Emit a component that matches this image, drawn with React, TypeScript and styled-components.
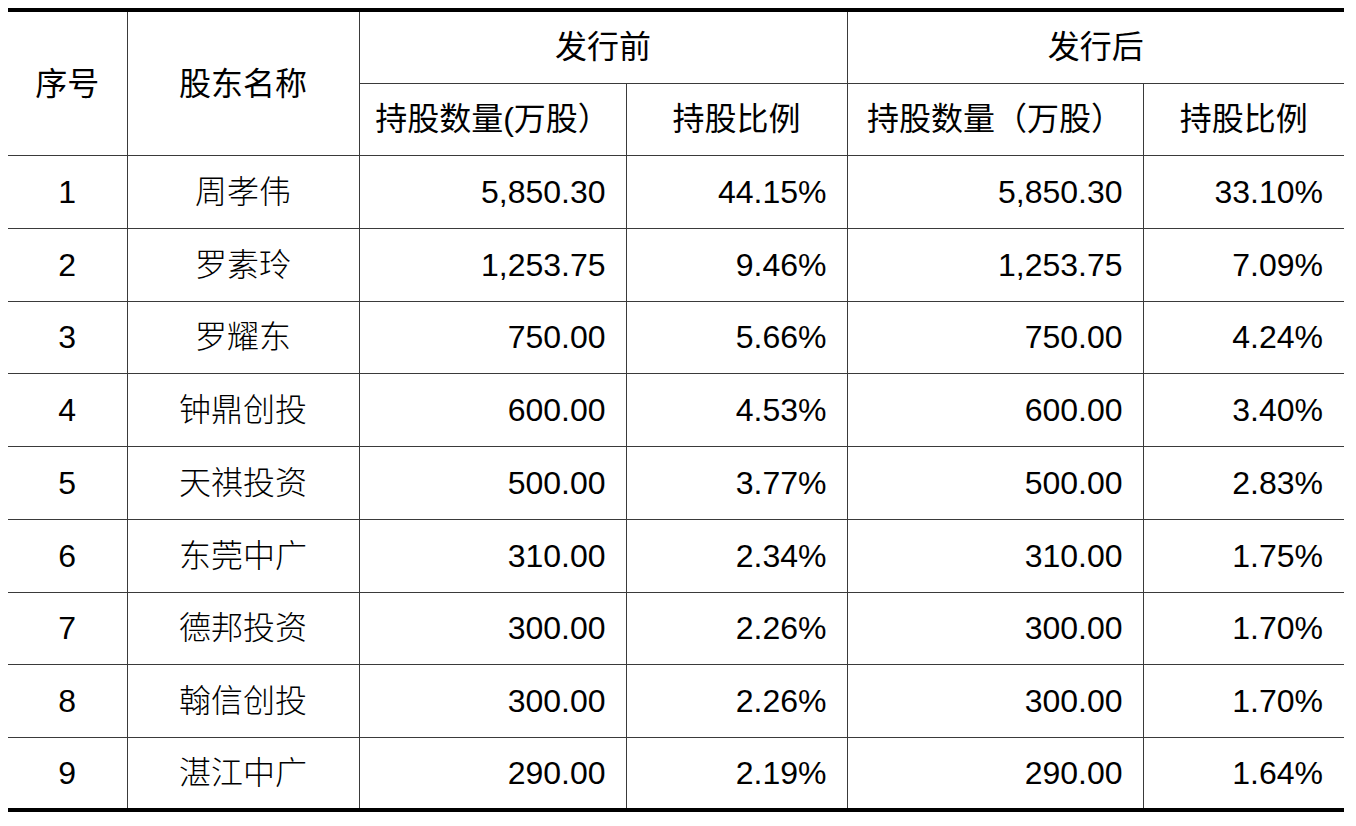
import React from "react";
import styled, { createGlobalStyle } from "styled-components";

const Global = createGlobalStyle`
  html, body { margin: 0; padding: 0; background: #ffffff; }
  body { padding: 8px; }
`;

const Table = styled.table`
  width: 1336px;
  border-collapse: collapse;
  table-layout: fixed;
  font-family: "Liberation Sans", Arial, "Noto Sans CJK SC", sans-serif;
  font-size: 32px;
  color: #000;
  border-top: 4px solid #000;
  border-bottom: 4px solid #000;
`;

const Row = styled.tr<{ $h?: number }>`
  height: ${(p) => p.$h ?? 73}px;
`;

const HeadCell = styled.th`
  font-weight: 400;
  padding: 0;
  text-align: center;
  vertical-align: middle;
  border: 1px solid #3a3a3a;
  line-height: 1;
  font-family: "Liberation Sans", "Noto Sans CJK SC", sans-serif;
  &:first-child { border-left: none; }
  &:last-child { border-right: none; }
`;

const Cell = styled.td<{ $align?: "center" | "right"; $light?: boolean }>`
  padding: 0 ${(p) => (p.$align === "right" ? "20px" : "0")} 0 0;
  text-align: ${(p) => p.$align ?? "center"};
  vertical-align: middle;
  border: 1px solid #3a3a3a;
  line-height: 1;
  font-weight: ${(p) => (p.$light ? 300 : 400)};
  &:first-child { border-left: none; }
  &:last-child { border-right: none; padding-right: 21px; }
`;

const rows = [
  ["1", "周孝伟", "5,850.30", "44.15%", "5,850.30", "33.10%"],
  ["2", "罗素玲", "1,253.75", "9.46%", "1,253.75", "7.09%"],
  ["3", "罗耀东", "750.00", "5.66%", "750.00", "4.24%"],
  ["4", "钟鼎创投", "600.00", "4.53%", "600.00", "3.40%"],
  ["5", "天祺投资", "500.00", "3.77%", "500.00", "2.83%"],
  ["6", "东莞中广", "310.00", "2.34%", "310.00", "1.75%"],
  ["7", "德邦投资", "300.00", "2.26%", "300.00", "1.70%"],
  ["8", "翰信创投", "300.00", "2.26%", "300.00", "1.70%"],
  ["9", "湛江中广", "290.00", "2.19%", "290.00", "1.64%"],
];

export default function App() {
  return (
    <>
      <Global />
      <Table>
        <colgroup>
          <col style={{ width: 119 }} />
          <col style={{ width: 232 }} />
          <col style={{ width: 267 }} />
          <col style={{ width: 221 }} />
          <col style={{ width: 296 }} />
          <col style={{ width: 201 }} />
        </colgroup>
        <thead>
          <Row $h={73}>
            <HeadCell rowSpan={2}>序号</HeadCell>
            <HeadCell rowSpan={2}>股东名称</HeadCell>
            <HeadCell colSpan={2}>发行前</HeadCell>
            <HeadCell colSpan={2}>发行后</HeadCell>
          </Row>
          <Row $h={72.5}>
            <HeadCell>持股数量(万股）</HeadCell>
            <HeadCell>持股比例</HeadCell>
            <HeadCell>持股数量（万股）</HeadCell>
            <HeadCell>持股比例</HeadCell>
          </Row>
        </thead>
        <tbody>
          {rows.map((r) => (
            <Row key={r[0]} $h={72.75}>
              <Cell>{r[0]}</Cell>
              <Cell $light>{r[1]}</Cell>
              <Cell $align="right">{r[2]}</Cell>
              <Cell $align="right">{r[3]}</Cell>
              <Cell $align="right">{r[4]}</Cell>
              <Cell $align="right">{r[5]}</Cell>
            </Row>
          ))}
        </tbody>
      </Table>
    </>
  );
}
